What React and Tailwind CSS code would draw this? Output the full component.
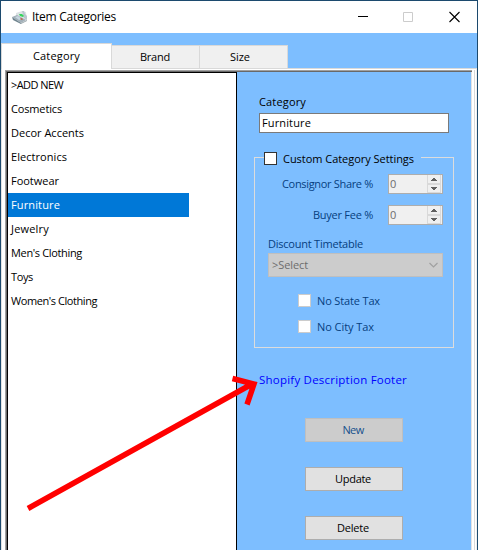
import { useLayoutEffect, useRef } from "react";

// Text label whose tracking is adjusted so that it fills the given width.
function Label({ w, children, className = "" }) {
  const ref = useRef(null);
  useLayoutEffect(() => {
    const el = ref.current;
    const fit = () => {
      el.style.letterSpacing = "0px";
      const natural = el.getBoundingClientRect().width;
      el.style.letterSpacing = `${(w - natural) / children.length}px`;
    };
    fit();
    document.fonts.ready.then(fit);
  }, [w, children]);
  return (
    <span ref={ref} className={`inline-block whitespace-pre ${className}`}>
      {children}
    </span>
  );
}

const categories = [
  [">ADD NEW", 52],
  ["Cosmetics", 51],
  ["Decor Accents", 73],
  ["Electronics", 56],
  ["Footwear", 48],
  ["Furniture", 49],
  ["Jewelry", 38],
  ["Men's Clothing", 71],
  ["Toys", 22],
  ["Women's Clothing", 86],
];

function AppIcon() {
  return (
    <svg width="18" height="16" viewBox="0 0 18 16" className="mt-px ml-[10px] shrink-0">
      <path d="M5 3 11 1l4 1 1 8-5 2-6-4Z" fill="#dce2e4" />
      <path d="M11 1l2 0 1 3 2 2v4l-3-2Z" fill="#b9c6ce" />
      <path d="M1 7l5-2 9 5-5 3Z" fill="#a3b1ba" />
      <path d="M1 7l9 6v1L2 10Z" fill="#6d828d" />
      <path d="M10 13l6-3v1l-6 3Z" fill="#9ba6ac" />
      <path d="M4 7l3-1 4 3-3 1Z" fill="#c5d6df" />
      <path d="M8 4l3 0 2 2-1 1-3-1Z" fill="#35d45e" />
      <path d="M10 8l2 1-1 1-2-1Z" fill="#bd5941" />
    </svg>
  );
}

function Spinner() {
  return (
    <div className="flex h-5 w-[55px] justify-between border border-[#adadad] bg-[#f0f0f0] text-[#6d6d6d]">
      <span className="pl-px leading-[18px]">0</span>
      <svg width="15" height="18" viewBox="0 0 15 18" shapeRendering="crispEdges">
        <path d="M.5 0v17.500h13V0M0 8.500h14M0 9.500h14" fill="none" stroke="#d9d9d9" />
        <path d="M6 3h2v1h1v1h1v1H4V5h1V4h1ZM4 12h6v1H9v1H8v1H6v-1H5v-1H4Z" fill="#606060" />
      </svg>
    </div>
  );
}

function Check({ dark }) {
  return (
    <span className={`block size-[13px] shrink-0 border bg-white ${dark ? "border-[#333333]" : "border-[#cccccc]"}`} />
  );
}

function Button({ label, w, disabled }) {
  return (
    <button
      className={`flex h-6 w-[98px] items-center justify-center border pr-[2px] text-[11px] ${
        disabled ? "border-[#bfbfbf] bg-[#cccccc] text-[#15508c]" : "border-[#adadad] bg-[#e1e1e1] text-black"
      }`}
    >
      <Label w={w}>{label}</Label>
    </button>
  );
}

function TitleBar() {
  return (
    <header className="flex h-8 shrink-0 items-center bg-white">
      <AppIcon />
      <Label w={84} className="ml-[3px] font-['Open_Sans',sans-serif] text-[12px] leading-8">
        Item Categories
      </Label>
      <svg width="102" height="12" viewBox="0 0 102 12" className="mr-[17px] ml-auto -mt-px">
        <path d="M0 5.500h10" stroke="#000" shapeRendering="crispEdges" />
        <path d="M45.500 1.500h9v9h-9Z" fill="none" stroke="#cccccc" />
        <path d="M91.500 1l10 10M101.500 1l-10 10" stroke="#000" strokeWidth="1.100" />
      </svg>
    </header>
  );
}

function Tabs() {
  return (
    <div className="flex h-[35px] shrink-0 items-end">
      <div className="z-10 -mb-px flex h-[26px] w-[111px] items-center justify-center border-x border-t border-[#d9d9d9] bg-white pb-px">
        <Label w={47}>Category</Label>
      </div>
      <div className="flex h-[23px] w-[88px] items-center justify-center border-t border-r border-[#d9d9d9] bg-[#f0f0f0] pr-px">
        <Label w={30}>Brand</Label>
      </div>
      <div className="flex h-[23px] w-[88px] items-center border-t border-r border-[#d9d9d9] bg-[#f0f0f0] pl-[30px]">
        <Label w={20}>Size</Label>
      </div>
    </div>
  );
}

function CategoryList() {
  return (
    <ul className="w-[230px] shrink-0 border-x border-t border-black bg-white">
      {categories.map(([name, w]) => (
        <li
          key={name}
          className={`h-6 w-[181px] pl-[3px] leading-6 ${name === "Furniture" ? "bg-[#0078d7] text-white" : ""}`}
        >
          <Label w={w}>{name}</Label>
        </li>
      ))}
    </ul>
  );
}

function Settings() {
  return (
    <section className="mt-[19px] ml-[17px] flex h-[196px] w-[200px] flex-col text-[#064080]">
      <div className="flex h-[13px] items-center text-black">
        <span className="mt-[-2px] h-px w-[10px] bg-[#dcdcdc]" />
        <Check dark />
        <Label w={131} className="ml-[6px] leading-[13px]">Custom Category Settings</Label>
        <span className="mt-[-2px] ml-[7px] h-px grow bg-[#dcdcdc]" />
      </div>
      <div className="-mt-[8px] flex grow flex-col border-x border-b border-[#dcdcdc] pt-[17px]">
        <div className="flex h-5 items-center justify-end pr-[10px]">
          <Label w={91} className="mr-[15px]">Consignor Share %</Label>
          <Spinner />
        </div>
        <div className="mt-[11px] flex h-5 items-center justify-end pr-[10px]">
          <Label w={60} className="mr-[15px]">Buyer Fee %</Label>
          <Spinner />
        </div>
        <Label w={95} className="mt-[11px] ml-[13px] h-[17px] self-start leading-[15px]">Discount Timetable</Label>
        <div className="ml-[13px] flex h-6 w-[175px] items-center justify-between border border-[#bfbfbf] bg-[#cccccc] pr-1 pl-[3px] text-[#6d6d6d]">
          <Label w={36}>{">Select"}</Label>
          <svg width="9" height="6" viewBox="0 0 9 6">
            <path d="M.5 1l4 4 4-4" fill="none" stroke="#a0a0a0" strokeWidth="1.200" />
          </svg>
        </div>
        <div className="mt-[17px] ml-[43px] flex h-[13px] items-center gap-[6px]">
          <Check />
          <Label w={63}>No State Tax</Label>
        </div>
        <div className="mt-[13px] ml-[43px] flex h-[13px] items-center gap-[6px]">
          <Check />
          <Label w={57}>No City Tax</Label>
        </div>
      </div>
    </section>
  );
}

export default function App() {
  return (
    <div className="relative flex h-[550px] w-[478px] flex-col overflow-hidden border-x border-t border-[#1c4a6e] bg-[#7dbeff] font-['Open_Sans','Noto_Sans',sans-serif] text-[11px] leading-4 text-black">
      <TitleBar />
      <Tabs />
      <main className="flex min-h-0 grow border-x border-t border-l-[#e3e3e3] border-t-[#d9d9d9] border-r-[#f0f0f0] bg-white pt-px pr-px pl-[3px]">
        <div className="flex grow border-t border-l border-[#a0a0a0]">
          <div className="flex grow border-t border-l border-[#696969] bg-[#7dbeff]">
            <CategoryList />
            <div className="flex grow flex-col border-r border-[#e3e3e3]">
              <Label w={47} className="mt-[22px] ml-[22px] self-start">Category</Label>
              <div className="mt-[3px] ml-[22px] flex h-5 w-[190px] items-center border border-[#7a7a7a] bg-white pl-[2px]">
                <Label w={49}>Furniture</Label>
              </div>
              <Settings />
              <Label w={148} className="mt-[24px] ml-[22px] self-start text-[11.5px] text-[#0000ff]">Shopify Description Footer</Label>
              <div className="mt-[30px] ml-[68px] flex flex-col gap-[25px]">
                <Button label="New" w={21} disabled />
                <Button label="Update" w={36} />
                <Button label="Delete" w={32} />
              </div>
            </div>
          </div>
        </div>
        <div className="w-[3px] shrink-0 border-r border-[#d9d9d9] bg-white" />
      </main>
      <svg className="pointer-events-none absolute -top-px -left-px" width="478" height="550" viewBox="0 0 478 550">
        <path d="M28 508.500 252 384M232.500 378.500l21.500 5.500L247 404.500" fill="none" stroke="#ff0000" strokeWidth="5.500" />
      </svg>
    </div>
  );
}
